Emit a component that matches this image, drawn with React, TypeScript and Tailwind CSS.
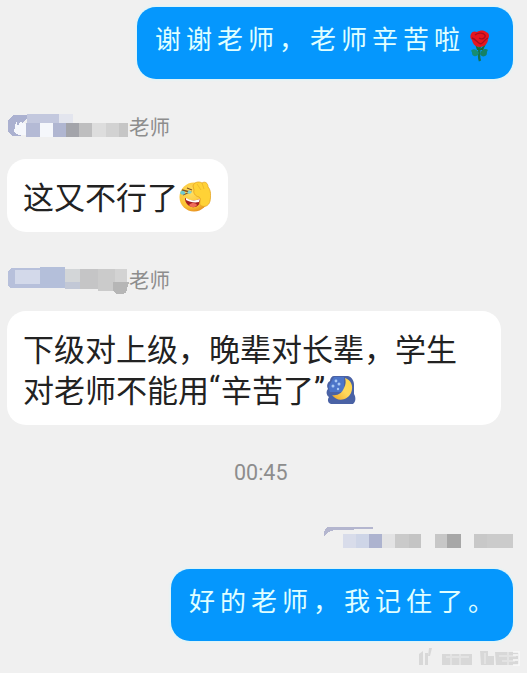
import type { ReactNode } from 'react'

const CJK = "font-['Noto_Sans_CJK_SC',sans-serif]"

type Block = [x: number, y: number, w: number, h: number, fill: string]

const FIRST_NAME: Block[] = [
  [20, 1, 32, 9, '#c3c8de'],
  [52, 1, 14, 9, '#e3e5ee'],
  [19, 10, 14, 14, '#b4bad5'],
  [33, 10, 13, 14, '#f5f7fb'],
  [46, 10, 13, 14, '#b0b6d1'],
  [59, 10, 13, 14, '#a3a4aa'],
  [72, 10, 13, 14, '#bebebf'],
  [85, 10, 14, 14, '#dddddd'],
  [99, 10, 13, 14, '#d2d2d2'],
  [112, 10, 9, 14, '#c6c6c6'],
]

const SECOND_NAME: Block[] = [
  [8, 4, 25, 14, '#d3d9ea'],
  [33, 1, 25, 21, '#b4bfda'],
  [58, 3, 15, 13, '#d3d6d8'],
  [58, 16, 15, 7, '#c2c8d6'],
  [73, 3, 18, 20, '#c5c5c6'],
  [91, 3, 17, 22, '#cbcbcb'],
  [108, 3, 12, 13, '#d3d3d3'],
]

const OWN_NAME: Block[] = [
  [20, 9, 13, 14, '#d8dcea'],
  [33, 9, 13, 14, '#ced5e7'],
  [46, 9, 13, 14, '#adb3cf'],
  [59, 9, 13, 14, '#e3e3e4'],
  [72, 9, 14, 14, '#cacaca'],
  [86, 9, 12, 14, '#c4c4c4'],
  [112, 9, 12, 14, '#c7c7c7'],
  [124, 9, 14, 14, '#a7a7a7'],
  [151, 9, 13, 14, '#c8c8c8'],
  [164, 9, 26, 14, '#cbcbcb'],
]

function Blocks({ blocks }: { blocks: Block[] }) {
  return (
    <>
      {blocks.map(([x, y, w, h, fill]) => (
        <rect key={`${x}-${y}`} x={x} y={y} width={w} height={h} fill={fill} />
      ))}
    </>
  )
}

function Sender({ children }: { children: ReactNode }) {
  return (
    <div className="flex h-7 items-center pl-[7px]">
      <svg width="122" height="28" viewBox="0 0 122 28" shapeRendering="crispEdges" className="shrink-0">
        {children}
      </svg>
      <span className="pb-[2px] text-[20.5px] leading-7 text-[#8d8d8d]">老师</span>
    </div>
  )
}

function Rose() {
  return (
    <svg width="24" height="34" viewBox="0 0 24 34" className="shrink-0">
      <path d="M12 16C11 22 10 27 12 32" stroke="#16724d" strokeWidth="2.4" fill="none" />
      <path d="M11 24C8 19 4 20 3 22C5 23 3 26 6 27C8 28 10 26 11 24Z" fill="#168d73" />
      <path d="M12 25C13 20 18 19 20 21C18 23 20 26 17 27C15 28 13 27 12 25Z" fill="#148166" />
      <path d="M7 15L12 20L18 15L15 21H9Z" fill="#176d35" />
      <path d="M3 5C4 2 7 2 9 3C12 1 16 1 18 3C21 4 22 7 20 10C20 14 17 18 12 18C7 18 5 15 4 11C2 9 2 7 3 5Z" fill="#e6151f" />
      <path d="M7 6C9 4 15 3 17 6C18 9 14 11 11 9M4 9C8 10 9 14 13 15M20 9C17 10 16 13 13 15" stroke="#a60d20" strokeWidth="1.3" fill="none" />
    </svg>
  )
}

function FacepalmLaugh() {
  return (
    <svg width="32" height="31" viewBox="0 0 32 31" className="shrink-0">
      <defs>
        <radialGradient id="face" cx="0.4" cy="0.35" r="0.7">
          <stop offset="0" stopColor="#ffe062" />
          <stop offset="0.7" stopColor="#fbc234" />
          <stop offset="1" stopColor="#e58a1e" />
        </radialGradient>
      </defs>
      <circle cx="15" cy="16" r="14.5" fill="url(#face)" />
      <path d="M3 9L11 11L4 14M8 7L13 9" stroke="#805326" strokeWidth="1.3" fill="none" />
      <path d="M2 10C4 9 7 11 6 13C4 14 2 14 1 12Z" fill="#71cbd0" />
      <path d="M10 9L13 11L11 13L8 12Z" fill="#86d2cb" />
      <path d="M6 17C11 20 16 20 21 18C22 24 17 27 13 26C9 25 6 22 6 17Z" fill="#a51e20" />
      <path d="M7 17C12 20 16 20 21 18L20 21C15 22 11 21 7 19Z" fill="#fff" />
      <path d="M10 24C13 21 17 22 18 24C16 27 12 27 10 24Z" fill="#f06a59" />
      <path d="M14 5C15 1 20 0 23 2C26 0 29 2 29 6C32 9 32 15 31 20C30 25 25 27 21 24C20 20 23 18 20 16C16 15 14 12 15 9Z" fill="#ffd236" stroke="#e5a322" strokeWidth="0.8" />
      <path d="M23 2L25 8M18 3L22 9" stroke="#edb42c" strokeWidth="0.8" />
    </svg>
  )
}

function Moon() {
  return (
    <svg width="30" height="30" viewBox="0 0 30 30" className="mt-[2px] shrink-0">
      <defs>
        <linearGradient id="moon" x1="0" y1="1" x2="1" y2="0">
          <stop offset="0" stopColor="#efa323" />
          <stop offset="0.5" stopColor="#ffd95d" />
          <stop offset="1" stopColor="#ffd344" />
        </linearGradient>
      </defs>
      <path d="M8 1H22C26 2 28 6 28 10V19C30 22 30 27 27 29H5C2 28 1 25 3 22C0 20 0 16 2 14C0 10 2 7 4 6C4 3 6 1 8 1Z" fill="#4a62a5" />
      <path d="M8 2H18V17H4C3 14 2 11 4 9Z" fill="#4c75c9" />
      <path d="M19 3C25 5 28 11 25 18C21 26 11 27 6 20C12 21 16 18 18 13C20 9 20 6 19 3Z" fill="url(#moon)" />
      <g fill="#a9c9f4">
        <circle cx="10" cy="6" r="1.4" />
        <circle cx="7" cy="11" r="1.5" />
        <circle cx="13" cy="9" r="1.5" />
        <circle cx="12" cy="14" r="1.2" />
      </g>
    </svg>
  )
}

function OutgoingBubble({ className, children }: { className: string; children: ReactNode }) {
  return (
    <div className={`flex h-[72px] items-center self-end rounded-[19px] bg-[#0597fd] pb-[10px] pl-[18px] text-[26px] font-normal leading-none tracking-[5px] whitespace-nowrap text-[#e0ffff] shadow-[0_0_2px_1px_#d8f5fb] ${className}`}>
      {children}
    </div>
  )
}

export default function App() {
  return (
    <main className={`relative flex h-[673px] w-[527px] flex-col overflow-hidden bg-[#f0f0f0] pt-[7px] pr-[14px] ${CJK}`}>
      <OutgoingBubble className="w-[376px]">
        谢谢老师，老师辛苦啦
        <span className="mt-[16px] ml-[3px]"><Rose /></span>
      </OutgoingBubble>

      <div className="mt-[34px]">
        <Sender>
          <path d="M6 2H20V6L14 11V23H5L1 19V7Z" fill="#abb1d0" />
          <path d="M9 8L7 19L12 22H19V11L13 9L11 13Z" fill="#f5f7fc" />
          <Blocks blocks={FIRST_NAME} />
        </Sender>
      </div>
      <div className="mt-[18px] ml-[7px] flex h-[73px] w-[221px] items-center rounded-[19px] bg-white pb-px pl-[16px] text-[31px] leading-none text-[#222]">
        <span className="whitespace-nowrap">这又不行了</span>
        <span className="mt-[3px] ml-px"><FacepalmLaugh /></span>
      </div>

      <div className="mt-[34px]">
        <Sender>
          <path d="M4 2H37V22H4L1 20V5Z" fill="#b7c0db" />
          <Blocks blocks={SECOND_NAME} />
          <path d="M108 16H122L119 27L111 29L106 25V16Z" fill="#b6b6b6" />
        </Sender>
      </div>
      <div className="mt-[17px] ml-[7px] h-[114px] w-[494px] rounded-[19px] bg-white pt-[16px] pl-[16px] text-[31px] leading-[41px] whitespace-nowrap text-[#222]">
        <p>下级对上级，晚辈对长辈，学生</p>
        <p className="flex items-center">
          对老师不能用
          <span className="w-3 font-['Roboto',sans-serif]">“</span>
          辛苦了
          <span className="w-3 font-['Roboto',sans-serif]">”</span>
          <Moon />
        </p>
      </div>

      <time className="mt-[34px] ml-[234px] font-['Roboto',sans-serif] text-[21.5px] leading-7 text-[#8d8d8d]">00:45</time>

      <svg width="190" height="28" viewBox="0 0 190 28" shapeRendering="crispEdges" className="mt-[38px] self-end">
        <path d="M1 7L4 2H50V4L11 5L5 7L1 12Z" fill="#b4b6cf" />
        <Blocks blocks={OWN_NAME} />
      </svg>
      <OutgoingBubble className="mt-[16px] w-[342px]">好的老师，我记住了。</OutgoingBubble>

      {/* Faded stamp in the corner */}
      <svg width="108" height="22" viewBox="0 0 108 22" className="absolute right-[4px] bottom-[4px] blur-[0.7px]">
        <g fill="#d8d8d8">
          <path d="M4 7L8 4V18H4ZM10 6H13V18H10ZM14 1H17L15 9H13Z" />
          <path d="M27 7H57V18H27ZM65 4H73V9H79V18H66ZM80 5H104V18H81Z" />
        </g>
        <path d="M31 10H54M36 7V18M45 7V18M70 6V17M84 9H101M87 14H100M93 5V18" stroke="#e3e3e3" strokeWidth="2" fill="none" />
        <path d="M98 5H104V18H98M103 8H98M103 13H98" stroke="#f9f9f9" strokeWidth="1.5" fill="none" />
      </svg>
    </main>
  )
}
